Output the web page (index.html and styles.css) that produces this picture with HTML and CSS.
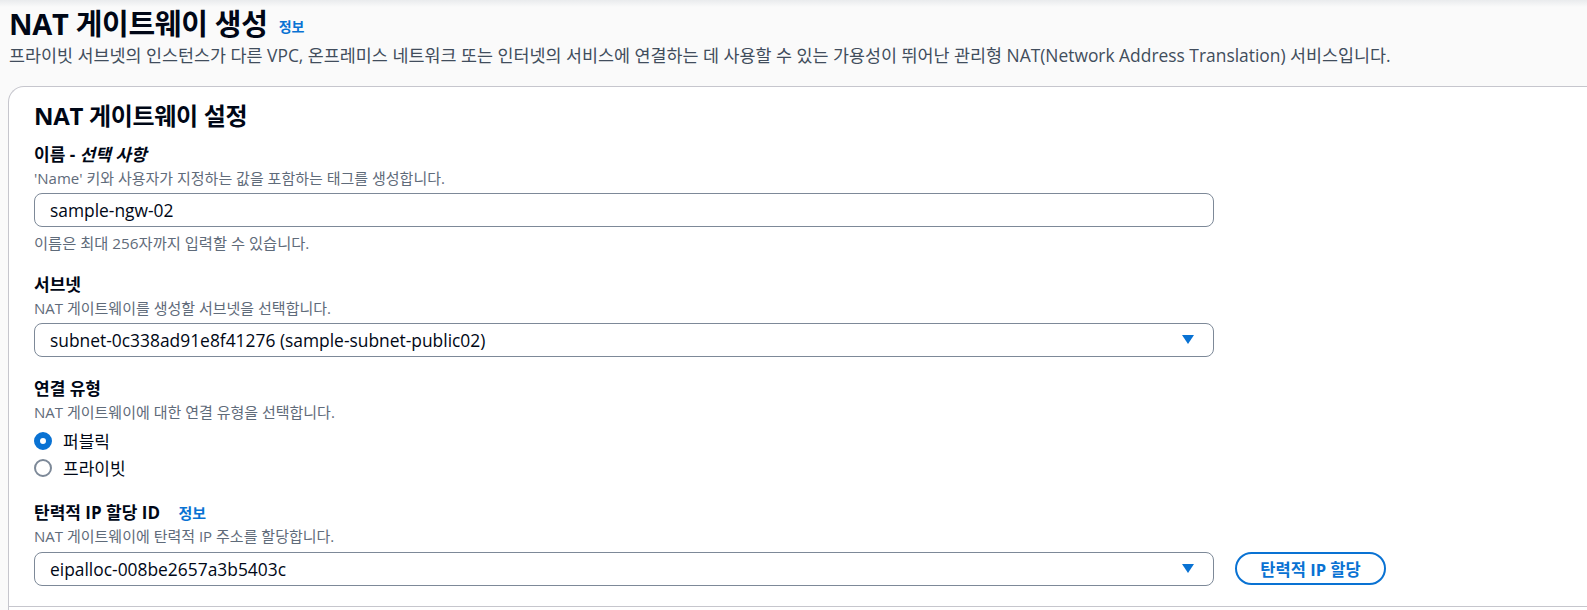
FILE: index.html
```
<!DOCTYPE html>
<html lang="ko">
<head>
  <meta charset="UTF-8"/>
  <meta name="viewport" content="width=device-width,initial-scale=1.0"/>
  <title>NAT 게이트웨이 생성</title>
  <link rel="stylesheet" href="styles.css">
</head>
<body>

<main class="page">
  <header class="page-head">
    <h1>NAT 게이트웨이 생성 <a href="#" class="info">정보</a></h1>
    <p class="page-desc">프라이빗 서브넷의 인스턴스가 다른 VPC, 온프레미스 네트워크 또는 인터넷의 서비스에 연결하는 데 사용할 수 있는 가용성이 뛰어난 관리형 NAT(Network Address Translation) 서비스입니다.</p>
  </header>

  <section class="card">
    <div class="card-body">
      <h2>NAT 게이트웨이 설정</h2>

      <div class="field">
        <label class="field-label">이름 - <i>선택 사항</i></label>
        <div class="field-help">'Name' 키와 사용자가 지정하는 값을 포함하는 태그를 생성합니다.</div>
        <div class="input">sample-ngw-02</div>
        <div class="field-hint">이름은 최대 256자까지 입력할 수 있습니다.</div>
      </div>

      <div class="field">
        <label class="field-label">서브넷</label>
        <div class="field-help">NAT 게이트웨이를 생성할 서브넷을 선택합니다.</div>
        <div class="select">
          <span>subnet-0c338ad91e8f41276 (sample-subnet-public02)</span>
          <svg class="caret" width="12" height="10" viewBox="0 0 12 10"><path d="M0 0h12L6 9z" fill="#0972d3"/></svg>
        </div>
      </div>

      <div class="field">
        <label class="field-label">연결 유형</label>
        <div class="field-help">NAT 게이트웨이에 대한 연결 유형을 선택합니다.</div>
        <div class="radios">
          <div class="radio checked"><span class="dot"></span>퍼블릭</div>
          <div class="radio"><span class="dot"></span>프라이빗</div>
        </div>
      </div>

      <div class="field">
        <label class="field-label">탄력적 IP 할당 ID <a href="#" class="info">정보</a></label>
        <div class="field-help">NAT 게이트웨이에 탄력적 IP 주소를 할당합니다.</div>
        <div class="row">
          <div class="select">
            <span>eipalloc-008be2657a3b5403c</span>
            <svg class="caret" width="12" height="10" viewBox="0 0 12 10"><path d="M0 0h12L6 9z" fill="#0972d3"/></svg>
          </div>
          <button class="btn">탄력적 IP 할당</button>
        </div>
      </div>
    </div>
    <div class="card-foot"></div>
  </section>
</main>

</body>
</html>
```
FILE: styles.css
```
/* ========== Base ========== */
* { margin:0; padding:0; box-sizing:border-box }
html, body { overflow:hidden }
body {
  font-family: "Open Sans", "Noto Sans CJK KR", sans-serif;
  color: #000716;
  background: linear-gradient(#e9ebed, #fafafa 7px) #fafafa;
}
.page { padding-left: 8px }
a.info { color:#0972d3; text-decoration:none; font-weight:700; font-size:14px; margin-left:6px }

/* ========== Header ========== */
.page-head h1 {
  font-size: 29px;
  line-height: 34px;
  font-weight: 700;
  padding: 7px 0 0 1px;
  letter-spacing: -0.3px;
}
.page-head h1 .info { vertical-align: 3px; margin-left: 4px }
.page-desc {
  font-size: 17.4px;
  line-height: 22px;
  color: #414d5c;
  padding-left: 1px;
}

/* ========== Card ========== */
.card {
  margin-top: 20px;
  background: #fff;
  border: 1px solid #c6c6cd;
  border-right: none;
  border-radius: 16px 0 0 0;
}
.card-body { padding: 14px 0 20px 25px }
.card h2 { font-size: 24px; line-height: 30px; font-weight: 700; letter-spacing: -0.3px }
.card-foot { border-top: 1px solid #c6c6cd; height: 10px }

.field { margin-top: 21px }
.card h2 + .field { margin-top: 13px }
.field-label { display:block; font-size:17px; line-height:22px; font-weight:700 }
.field-label i { font-style: italic }
.field-label .info { margin-left: 14px; font-size:15px }
.field-help, .field-hint { font-size:15px; line-height:20px; color:#5f6b7a; margin-top:2px }
.field-hint { margin-top: 6px; font-size:15.3px }

.input, .select {
  width: 1180px;
  height: 34px;
  margin-top: 5px;
  border: 1px solid #7d8998;
  border-radius: 8px;
  padding: 0 15px;
  display: flex;
  align-items: center;
  font-size: 17.4px;
}
.select { justify-content: space-between; padding-right: 19px }
.caret { display:block }

.radios { margin-top: 5px }
.radio { display:flex; align-items:center; height:27px; font-size:17px; gap:11px }
.radio .dot {
  width: 18px; height: 18px;
  border-radius: 50%;
  border: 2px solid #7d8998;
}
.radio.checked .dot { border: 6px solid #0972d3 }

.row { display:flex; align-items:center; gap:21px }
.row .select { margin-top: 6px }
.btn {
  margin-top: 5px;
  height: 33px;
  width: 151px;
  border: 2px solid #0972d3;
  border-radius: 20px;
  background: #fff;
  color: #0972d3;
  font: 700 16.5px "Open Sans", "Noto Sans CJK KR", sans-serif;
}
```
